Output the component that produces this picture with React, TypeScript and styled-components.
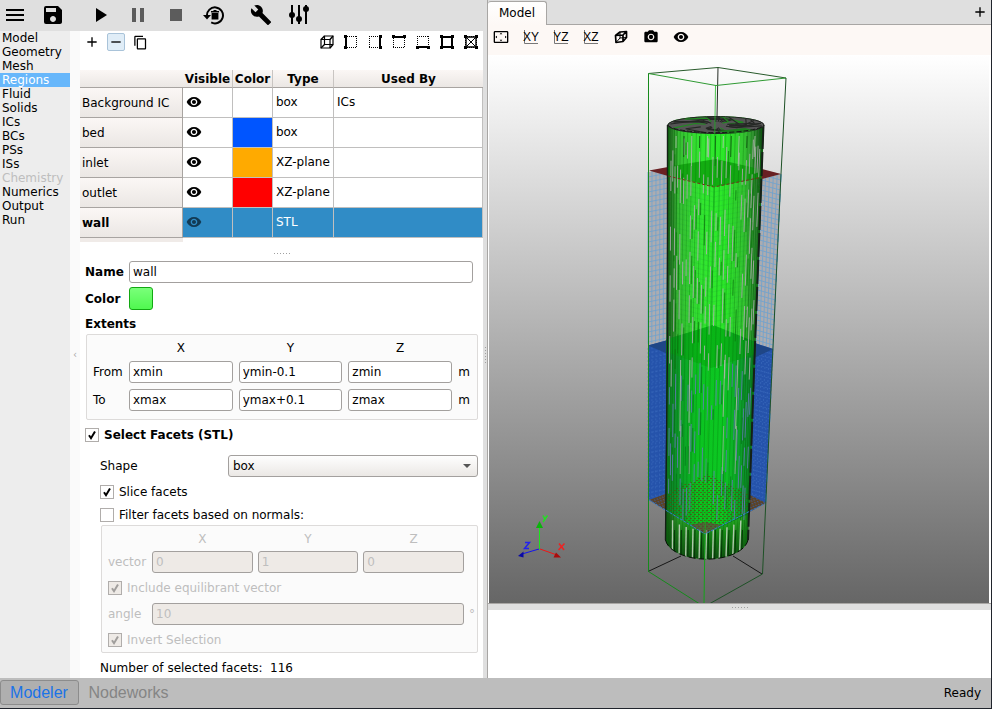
import React from "react";
import styled, { createGlobalStyle, css } from "styled-components";
import {
  MdAdd,
  MdBuild,
  MdContentCopy,
  MdMenu,
  MdPause,
  MdPhotoCamera,
  MdPlayArrow,
  MdRemove,
  MdSave,
  MdSettingsOverscan,
  MdStop,
  MdVisibility,
} from "react-icons/md";

const GlobalStyle = createGlobalStyle`
  * { box-sizing: border-box; }
  body { margin: 0; background: #fff; }
  body, button, input, select, table {
    font-family: "DejaVu Sans", Verdana, sans-serif;
    font-size: 12px;
    line-height: 14px;
    color: #000;
  }
`;

const Window = styled.div`
  display: flex;
  flex-direction: column;
  min-height: 100vh;
  border-right: 1px solid #20242c;
  border-bottom: 1px solid #20242c;
`;

const Main = styled.main`
  flex: 1;
  display: grid;
  grid-template-columns: minmax(0, 487fr) minmax(0, 504fr);
`;

const LeftSide = styled.div`
  display: flex;
  flex-direction: column;
`;

const MainToolbar = styled.header`
  display: flex;
  align-items: center;
  height: 31px;
  padding: 0 0 2px 3px;
  background: #dfdfdf;
`;

const ToolButton = styled.button<{ $size?: number; $after?: number; $muted?: boolean; $active?: boolean }>`
  display: flex;
  align-items: center;
  justify-content: center;
  flex: none;
  width: ${(p) => p.$size ?? 24}px;
  height: ${(p) => p.$size ?? 24}px;
  margin-right: ${(p) => p.$after ?? 0}px;
  padding: 0;
  border: 0;
  background: none;
  color: ${(p) => (p.$muted ? "#5c5c5c" : "#000")};
  ${(p) =>
    p.$active &&
    css`
      border: 1px solid #a9c3d9;
      border-radius: 2px;
      background: #e0edf7;
    `}
`;

const Workspace = styled.div`
  flex: 1;
  display: flex;
`;

const Nav = styled.nav`
  flex: none;
  display: flex;
  flex-direction: column;
  width: 70px;
  background: #ededed;
`;

const NavLink = styled.a<{ $state?: "active" | "disabled" }>`
  padding-left: 2px;
  line-height: 14px;
  text-decoration: none;
  color: ${(p) => (p.$state === "active" ? "#fff" : p.$state === "disabled" ? "#bebebe" : "#000")};
  background: ${(p) => (p.$state === "active" ? "#67b7fb" : "transparent")};
`;

const CollapseBar = styled.button`
  flex: none;
  width: 10px;
  padding: 0;
  border: 0;
  background: #fafafa;
  color: #aaa;
  font-size: 10px;
`;

const Panel = styled.section`
  flex: 1;
  min-width: 0;
  background: #fff;
`;

const Splitter = styled.div`
  flex: none;
  display: flex;
  align-items: center;
  justify-content: center;
  width: 4px;
  background: #dfdfdf;
`;

const SplitterRow = styled.div<{ $filled?: boolean }>`
  display: flex;
  align-items: center;
  justify-content: center;
  height: ${(p) => (p.$filled ? 7 : 19)}px;
  padding-top: ${(p) => (p.$filled ? 0 : 4)}px;
  background: ${(p) => (p.$filled ? "#dfdfdf" : "none")};
  border-top: ${(p) => (p.$filled ? "1px solid #a8a6a4" : "0")};
`;

const Grip = styled.span<{ $vertical?: boolean }>`
  width: ${(p) => (p.$vertical ? 1 : 16)}px;
  height: ${(p) => (p.$vertical ? 16 : 1)}px;
  background: repeating-linear-gradient(
    ${(p) => (p.$vertical ? "180deg" : "90deg")},
    #a0a0a0 0 1px,
    transparent 1px 3px
  );
`;

const RegionToolbar = styled.div`
  display: flex;
  align-items: center;
  height: 23px;
  margin-bottom: 16px;
  padding-bottom: 1px;
`;

const Spacer = styled.span`
  flex: 1;
`;

const RegionTable = styled.table`
  width: 100%;
  table-layout: fixed;
  border-collapse: separate;
  border-spacing: 0;
  text-align: left;
`;

const Col = styled.col<{ $width?: number }>`
  width: ${(p) => (p.$width ? `${p.$width}px` : "auto")};
`;

const HeadCell = styled.th<{ $line?: boolean }>`
  height: 18px;
  padding: 0;
  text-align: center;
  white-space: nowrap;
  background: linear-gradient(#fbf7f5, #ebe7e4);
  border-bottom: 1px solid #a8a4a1;
  border-right: ${(p) => (p.$line ? "1px solid #c9c5c2" : "0")};
`;

const RowHead = styled.th<{ $bold?: boolean }>`
  height: 30px;
  padding: 0 2px;
  font-weight: ${(p) => (p.$bold ? "bold" : "normal")};
  white-space: nowrap;
  background: linear-gradient(#fbf7f5, #ebe7e4);
  border-right: 1px solid #a8a4a1;
  border-bottom: 1px solid #a8a4a1;
`;

const Cell = styled.td<{ $fill?: string; $selected?: boolean }>`
  height: 30px;
  padding: 0 3px 2px;
  color: ${(p) => (p.$selected ? "#fff" : "#000")};
  background: ${(p) => (p.$selected ? "#308cc6" : p.$fill ?? "#fff")};
  border-right: 1px solid #c0bfbe;
  border-bottom: 1px solid #c0bfbe;
  svg {
    display: block;
    color: ${(p) => (p.$selected ? "#123a54" : "#000")};
  }
`;

const HeaderTail = styled.div`
  width: 103px;
  height: 4px;
  background: #f0ebe8;
`;

const Form = styled.form`
  display: flex;
  flex-direction: column;
  padding: 0 5px 0 5px;
`;

const Field = styled.div<{ $label: number; $gap?: number; $inset?: number }>`
  display: grid;
  grid-template-columns: ${(p) => p.$label}px minmax(0, 1fr);
  align-items: center;
  margin-bottom: ${(p) => p.$gap ?? 0}px;
  padding-right: ${(p) => p.$inset ?? 0}px;
`;

const Label = styled.label<{ $bold?: boolean; $muted?: boolean }>`
  font-weight: ${(p) => (p.$bold ? "bold" : "normal")};
  color: ${(p) => (p.$muted ? "#bebebe" : "#000")};
`;

const TextInput = styled.input`
  width: 100%;
  min-width: 0;
  height: 22px;
  padding: 0 3px;
  border: 1px solid #a3a09e;
  border-radius: 3px;
  background: #fff;
  &:disabled {
    background: #eeeae6;
    color: #bebebe;
  }
`;

const ColorButton = styled.button`
  width: 24px;
  height: 23px;
  border: 1px solid #12a812;
  border-radius: 3px;
  background: linear-gradient(#7aff7a, #50f850);
`;

const SectionTitle = styled.h2`
  margin: 0 0 3px;
  font-size: 12px;
  line-height: 14px;
`;

const ExtentsBox = styled.div`
  display: grid;
  grid-template-columns: 30px repeat(3, minmax(0, 1fr)) 12px;
  column-gap: 6px;
  row-gap: 6px;
  align-items: center;
  height: 86px;
  margin: 0 0 8px 1px;
  padding: 6px 7px 8px 6px;
  border: 1px solid #dddbda;
  border-radius: 2px;
  background: #fbfbfb;
`;

const NormalsBox = styled.fieldset`
  display: flex;
  flex-direction: column;
  margin: 3px 0 8px 1px;
  padding: 6px;
  border: 1px solid #dddbda;
  border-radius: 2px;
  background: #fbfbfb;
  min-width: 0;
  height: 128px;
`;

const VectorGrid = styled.div`
  display: grid;
  grid-template-columns: 39px repeat(3, minmax(0, 1fr)) 1px;
  column-gap: 5px;
  row-gap: 5px;
  align-items: center;
  margin-bottom: 8px;
  padding-right: 1px;
`;

const AngleRow = styled.div`
  display: grid;
  grid-template-columns: 39px minmax(0, 1fr) 6px;
  column-gap: 5px;
  align-items: center;
  margin: 8px 0;
  margin-right: -4px;
`;

const AxisName = styled.span<{ $muted?: boolean }>`
  text-align: center;
  color: ${(p) => (p.$muted ? "#bebebe" : "#000")};
`;

const Unit = styled.span<{ $muted?: boolean }>`
  text-align: right;
  color: ${(p) => (p.$muted ? "#bebebe" : "#000")};
`;

const Options = styled.div`
  padding-left: 15px;
`;

const CheckRow = styled.div<{ $gap?: number }>`
  display: flex;
  align-items: center;
  gap: 5px;
  height: 14px;
  margin-bottom: ${(p) => p.$gap ?? 0}px;
`;

const Check = styled.input.attrs({ type: "checkbox" })`
  appearance: none;
  flex: none;
  width: 14px;
  height: 14px;
  margin: 0;
  border: 1px solid #b0adab;
  background-color: #fff;
  background-position: center;
  background-repeat: no-repeat;
  &:checked {
    background-image: url("data:image/svg+xml,%3Csvg xmlns='http://www.w3.org/2000/svg' width='12' height='12'%3E%3Cpath d='M3 6.2L5 9.2L9 2.6' fill='none' stroke='black' stroke-width='2'/%3E%3C/svg%3E");
  }
  &:disabled {
    background-color: #eeeae6;
  }
  &:disabled:checked {
    background-image: url("data:image/svg+xml,%3Csvg xmlns='http://www.w3.org/2000/svg' width='12' height='12'%3E%3Cpath d='M3 6.2L5 9.2L9 2.6' fill='none' stroke='%23a09e9c' stroke-width='2'/%3E%3C/svg%3E");
  }
`;

const Select = styled.select`
  appearance: none;
  width: 100%;
  height: 22px;
  padding: 0 4px;
  border: 1px solid #a3a09e;
  border-radius: 3px;
  background:
    url("data:image/svg+xml,%3Csvg xmlns='http://www.w3.org/2000/svg' width='8' height='4'%3E%3Cpath d='M0 0H8L4 4Z' fill='%23555'/%3E%3C/svg%3E") right 6px center no-repeat,
    linear-gradient(#fefefe, #ebe8e5);
`;

const RightSide = styled.div`
  display: flex;
  flex-direction: column;
  border-left: 1px solid #a8a6a4;
  background: #fff;
`;

const TabBar = styled.div`
  display: flex;
  height: 25px;
  padding-top: 1px;
  background: linear-gradient(#dfdfdf 24px, #a8a6a4 24px);
`;

const Tab = styled.button`
  width: 59px;
  padding: 0 0 2px;
  border: 1px solid #a8a6a4;
  border-width: 1px 1px 0 0;
  border-radius: 3px 3px 0 0;
  background: linear-gradient(#fff, #fdf8f5);
`;

const ViewToolbar = styled.div`
  display: flex;
  align-items: center;
  gap: 6px;
  height: 30px;
  padding: 0 1px 6px;
  background: #fdf8f5;
`;

const Viewport = styled.div`
  flex: 1;
  display: flex;
  min-height: 0;
  margin: 0 2px 0 1px;
  background: linear-gradient(#fff, #666);
  svg {
    flex: 1;
    width: 100%;
    height: auto;
  }
`;

const Console = styled.div`
  height: 68px;
  background: #fff;
`;

const StatusBar = styled.footer`
  display: flex;
  align-items: center;
  height: 30px;
  padding: 0 10px 1px 0;
  background: #bdbdbd;
`;

const ModeButton = styled.button<{ $active?: boolean }>`
  height: 25px;
  width: ${(p) => (p.$active ? 79 : 100)}px;
  padding: 0 1px 0 0;
  border: 1px solid ${(p) => (p.$active ? "#8c8c8c" : "transparent")};
  border-radius: 3px;
  background: ${(p) => (p.$active ? "#afafaf" : "none")};
  color: ${(p) => (p.$active ? "#1a73e8" : "#858585")};
  font-family: "Liberation Sans", Arial, sans-serif;
  font-size: 16px;
  line-height: 20px;
`;

/* ---------- icons ---------- */

const ResetIcon = () => (
  <svg width="22" height="20" viewBox="0 0 22 20">
    <path d="M4 11A8 8 0 1 1 8.2 17.4" fill="none" stroke="#000" strokeWidth="2" />
    <path d="M0 10H8L4 14.5Z" fill="#000" />
    <path d="M8 6H16V7.5H8ZM10.5 5H13.5V6H10.5ZM8.6 8H15.4V14.5H8.6Z" fill="#000" />
  </svg>
);

const SlidersIcon = () => (
  <svg width="20" height="19" viewBox="0 0 20 19" stroke="#000" strokeWidth="2">
    <path d="M3 0V19M10 0V19M17 0V19" />
    <circle cx="3" cy="10" r="2" fill="#000" />
    <circle cx="10" cy="14" r="2" fill="#000" />
    <circle cx="17" cy="4" r="2" fill="#000" />
  </svg>
);

const CubeIcon = () => (
  <svg width="14" height="14" viewBox="0 0 14 14" fill="none" stroke="#000">
    <path d="M1 4.5H10V13H1ZM4.5 1H13V9.5H4.5Z" strokeWidth="1.2" />
    <path d="M1 4.5L4.5 1M10 4.5L13 1M10 13L13 9.5M1 13L4.5 9.5" strokeWidth="1.4" />
  </svg>
);

type Side = "left" | "right" | "top" | "bottom" | "all" | "cross";

const sidePaths: Record<Side, string> = {
  left: "M2 0V14",
  right: "M12 0V14",
  top: "M0 2H14",
  bottom: "M0 12H14",
  all: "M2 2H12V12H2Z",
  cross: "M2 2H12V12H2Z",
};

const sideCorners: Record<Side, number[][]> = {
  left: [[0, 0], [0, 11]],
  right: [[11, 0], [11, 11]],
  top: [[0, 0], [11, 0]],
  bottom: [[0, 11], [11, 11]],
  all: [[0, 0], [11, 0], [0, 11], [11, 11]],
  cross: [[0, 0], [11, 0], [0, 11], [11, 11]],
};

const SideIcon = ({ side }: { side: Side }) => (
  <svg width="14" height="14" viewBox="0 0 14 14" fill="none" stroke="#000">
    <path
      d="M1 1.5H13M1 12.5H13M1.5 1V13M12.5 1V13"
      strokeDasharray="1 1"
      shapeRendering="crispEdges"
    />
    <path d={sidePaths[side]} strokeWidth={side === "cross" ? 1.4 : 2} />
    {side === "cross" && <path d="M2 2L12 12M12 2L2 12" strokeWidth="1" />}
    {sideCorners[side].map(([x, y]) => (
      <rect key={`${x}-${y}`} x={x} y={y} width="3" height="3" fill="#000" stroke="none" />
    ))}
  </svg>
);

const PlaneText = styled.text`
  font-family: "Liberation Sans Narrow", "Liberation Sans", sans-serif;
  font-size: 12px;
  fill: #000;
`;

const PlaneIcon = ({ name }: { name: string }) => (
  <svg width="18" height="16" viewBox="0 0 18 16">
    <path d="M2.5 1V14.5H16" fill="none" stroke="#777" />
    <PlaneText x="9" y="12" textAnchor="middle">{name}</PlaneText>
  </svg>
);

const PerspectiveIcon = () => (
  <svg width="14" height="14" viewBox="0 0 14 14" fill="none" stroke="#000" strokeLinejoin="round">
    <path d="M1.5 5.5L9 5V11.5L2 12.5ZM1.5 5.5L6 2L12.5 1.5L9 5M12.5 1.5V7.5L9 11.5" strokeWidth="1.7" />
    <path d="M6 2V8L2 12.5M6 8L12.5 7.5" />
  </svg>
);

/* ---------- 3D scene ---------- */

function makeRandom(seed: number) {
  let s = seed;
  return () => {
    s = (s * 1103515245 + 12345) % 2147483648;
    return s / 2147483648;
  };
}

const lerp = (a: number, b: number, t: number) => a + (b - a) * t;

/** x position on the cylinder surface for u in -1..1 at height y. */
const surfaceX = (u: number, y: number) => {
  const t = (y - 125) / 415;
  return lerp(716, 706.5, t) + u * lerp(48, 41, t);
};

interface Streak {
  d: string;
  color: string;
  width: number;
  opacity: number;
}

function buildStreaks(): Streak[] {
  const random = makeRandom(77);
  const streaks: Streak[] = [];
  const add = (u: number, y1: number, y2: number, color: string, opacity: number, width = 1) =>
    streaks.push({
      d: `M${surfaceX(u, y1).toFixed(1)} ${y1.toFixed(1)}L${surfaceX(u, y2).toFixed(1)} ${y2.toFixed(1)}`,
      color,
      width,
      opacity,
    });

  const facets = 30;
  for (let i = 0; i <= facets; i++) {
    const u = Math.sin(lerp(-Math.PI / 2, Math.PI / 2, i / facets));
    const edge = Math.sqrt(1 - u * u);
    add(u, 125 + 8 * edge, 540 + 20 * edge, "#086a0b", Math.abs(u) > 0.8 ? 0.6 : 0.3);
  }
  for (let c = 0; c < 26; c++) {
    const u = Math.sin(lerp(-1.2, 1.2, c / 25));
    let y = 138 + random() * 40;
    while (y < 505) {
      const length = 14 + random() * 22;
      const light = y > 362 ? "#6678bd" : "#b9adb9";
      if (random() > 0.22) add(u, y, Math.min(y + length, 520), light, 0.8);
      if (random() > 0.6) add(u + 0.04, y + 4, Math.min(y + length, 520), y > 362 ? "#06741b" : "#0b700c", 0.7);
      y += length + 8 + random() * 34;
    }
  }
  for (const u of [-0.68, -0.47, 0.32, 0.62]) {
    add(u, 360, 404 + Math.abs(u) * 40, "#b7b7b0", 0.85);
    add(u + 0.02, 426, 474, "#a9a7a9", 0.7);
  }
  for (let i = 0; i < 11; i++) {
    const u = -0.83 + i * 0.165;
    const edge = Math.sqrt(1 - u * u);
    const end = 540 + 20 * edge;
    add(u, 136, 136 + 12 + (i % 3) * 9, i % 2 ? "#0b4a0c" : "#b8c4b4", 0.8);
    add(u, 508 + 22 * edge, end, "#b9ceb4", 0.95, 1.4);
    add(u + 0.05, 530, end, "#032905", 0.8);
  }
  return streaks;
}

function buildTopFacets(): string[] {
  const random = makeRandom(19);
  return Array.from({ length: 26 }, () => {
    const a = random() * Math.PI * 2;
    const r = 0.4 + random() * 0.5;
    const b = a + 0.3 + random() * 0.8;
    const p = (t: number, k: number) => `${(716 + Math.cos(t) * 46 * k).toFixed(1)} ${(125 + Math.sin(t) * 8 * k).toFixed(1)}`;
    return `M${p(a, 1)}L${p(b, r)}L${p(b, r * 0.5)}`;
  });
}

/** Line mesh over a wall whose two vertical edges run from top to bottom. */
function wallMesh(top: number[], bottom: number[], rise: number, columns: number, step: number) {
  const [xl, xr, yt] = top;
  const [bl, br, yb] = bottom;
  let d = "";
  for (let c = 0; c <= columns; c++) {
    const t = c / columns;
    d += `M${lerp(xl, xr, t).toFixed(1)} ${(yt + rise * t).toFixed(1)}L${lerp(bl, br, t).toFixed(1)} ${(yb + rise * t).toFixed(1)}`;
  }
  for (let y = yt + step; y < yb; y += step) {
    const t = (y - yt) / (yb - yt);
    d += `M${lerp(xl, bl, t).toFixed(1)} ${y.toFixed(1)}L${lerp(xr, br, t).toFixed(1)} ${(y + rise).toFixed(1)}`;
  }
  return d;
}

const streaks = buildStreaks();
const topFacets = buildTopFacets();
const leftMesh = wallMesh([648, 668, 172], [648, 667, 344], -4, 5, 5);
const rightMesh = wallMesh([762, 781, 170], [756, 773, 344], 5, 5, 5);
const leftBedMesh = wallMesh([648, 668, 348], [648, 667, 500], -4, 5, 5);
const rightBedMesh = wallMesh([755, 773, 344], [749, 766, 496], 5, 5, 5);
const frontMesh = wallMesh([668, 714, 176], [667, 711, 350], 11, 11, 5);
const frontMeshRight = wallMesh([714, 762, 187], [711, 756, 361], -9, 11, 5);

const cylinderPath = "M667.5 125A48 9 0 0 1 764 125L748 540A41.5 21.5 0 0 1 665.5 540Z";

const Scene = () => (
  <svg viewBox="489 55 500 548" preserveAspectRatio="xMidYMid meet" role="img" aria-label="Model view" fill="none">
    <defs>
      <linearGradient id="body">
        <stop offset="0" stopColor="#1c4d1c" />
        <stop offset="0.06" stopColor="#2f7a2c" />
        <stop offset="0.13" stopColor="#37bd33" />
        <stop offset="0.35" stopColor="#33e630" />
        <stop offset="0.6" stopColor="#2be828" />
        <stop offset="0.8" stopColor="#35c431" />
        <stop offset="0.92" stopColor="#2f7f30" />
        <stop offset="1" stopColor="#0d2f10" />
      </linearGradient>
      <linearGradient id="bed">
        <stop offset="0" stopColor="#10363a" />
        <stop offset="0.14" stopColor="#0e7c2e" />
        <stop offset="0.4" stopColor="#0bc321" />
        <stop offset="0.6" stopColor="#0cc822" />
        <stop offset="0.86" stopColor="#0c7a33" />
        <stop offset="1" stopColor="#12324a" />
      </linearGradient>
      <linearGradient id="shade" x1="0" y1="0" x2="0" y2="1">
        <stop offset="0" stopColor="#0a540b" stopOpacity="0" />
        <stop offset="0.5" stopColor="#0a480b" stopOpacity="0.6" />
        <stop offset="1" stopColor="#0a360b" stopOpacity="0.95" />
      </linearGradient>
      <pattern id="dots" width="4" height="4" patternUnits="userSpaceOnUse">
        <path d="M0 .5H2M2 2.5H4" stroke="#5b4a10" />
      </pattern>
      <pattern id="gauze" width="4" height="4" patternUnits="userSpaceOnUse" patternTransform="rotate(25)">
        <rect width="4" height="4" fill="#5c4224" />
        <path d="M0 .5H1.5M2 2.5H3.5" stroke="#3a5c98" />
      </pattern>
      <clipPath id="cylinderClip"><path d={cylinderPath} /></clipPath>
      <clipPath id="topClip"><ellipse cx="716" cy="125" rx="48" ry="9" /></clipPath>
    </defs>

    <path d="M648 571.5L681 556M762 574L733 556" stroke="#171717" />
    <path d="M718 67.5L717 117" stroke="#252c25" />

    <path d="M648 172L668 168V344L648 348ZM762 170L781 174L773 349L756 344Z" fill="#acacb0" />
    <path d={leftMesh + rightMesh} stroke="#6da2cf" strokeWidth="0.8" />
    <path d="M648 345.5L668 340V496L648 500ZM755 343L773 349L766 503L749 496Z" fill="#2553ab" />
    <path d={leftBedMesh + rightBedMesh} stroke="#4372c2" strokeWidth="0.5" strokeDasharray="2 2" />
    <path d="M648 345.5L668 340V354ZM773 349L754 343V358Z" fill="#1f4686" />
    <path d="M649 170.5L668 167V176ZM781 174L762 169V179Z" fill="#692023" />
    <path d="M649 500L668 493V512ZM766 503L748 494V513Z" fill="url(#gauze)" />

    <path d={cylinderPath} fill="url(#body)" />
    <g clipPath="url(#cylinderClip)">
      <path d="M648 170L716 159L781 174L714 187Z" fill="#0a9a08" fillOpacity="0.75" />
      <path d={frontMesh + frontMeshRight} stroke="#239742" strokeWidth="0.5" opacity="0.3" />
      <path d="M648 345L713 325L773 349V503L705 534L648 500Z" fill="url(#bed)" />
      <path d="M648 345L713 325L773 349L711 368Z" fill="#05a40b" fillOpacity="0.5" />
      <path d="M649 500L708 474L766 503L705 534Z" fill="url(#dots)" opacity="0.7" />
      <path d="M648 500L705 534L766 503V565H648Z" fill="url(#shade)" />
      {streaks.map((s, i) => (
        <path key={i} d={s.d} stroke={s.color} strokeWidth={s.width} opacity={s.opacity} />
      ))}
      <path d="M668 176L714 187L763 177" stroke="#73331d" strokeDasharray="3 2" />
      <path d="M690 525L705 534L722 525L705 522Z" fill="#722f42" opacity="0.6" />
    </g>
    <path d="M667.5 125V345L665.5 540" stroke="#152017" strokeWidth="1.4" />
    <path d="M763.5 125L755 345L748 540" stroke="#152017" strokeWidth="2" strokeDasharray="24 3" />
    <path d="M665.5 540A41.5 21.5 0 0 0 748 540" stroke="#081008" strokeDasharray="7 3" />

    <ellipse cx="716" cy="125" rx="48" ry="8.5" fill="#555" stroke="#222" />
    <g clipPath="url(#topClip)">
      {topFacets.map((d, i) => (
        <path key={d} d={d} stroke={i % 6 === 0 ? "#208a20" : "#252825"} strokeWidth="1.1" />
      ))}
      <path d="M717 131L745 128L756 131L730 134Z" fill="#1c7d1d" />
    </g>
    <path d="M667.5 125A48.5 8.5 0 0 0 764 125" stroke="#151a15" strokeDasharray="5 2" />

    <path d="M649 500L705 534L766 503" stroke="#347bd0" strokeDasharray="3 1" />
    <path d="M648.5 170V500" stroke="#405a69" strokeDasharray="9 4" />
    <path d="M781 174L773 349L766 503" stroke="#4895de" strokeDasharray="8 12" />

    <path d="M648.5 73.5L718 67.5L786 78" stroke="#285a2b" />
    <path d="M648.5 73.5L716 85.5L786 78" stroke="#2f9a33" />
    <path d="M648.5 73.5V571.5L699 603.5" stroke="#168a1c" />
    <path d="M786 78L781 174L762.5 574L710 603.5" stroke="#1e5126" />
    <path d="M715.5 85.5L714 187L705 534" stroke="#14b61a" opacity="0.75" />
    <path d="M705 534L704 603.5" stroke="#15a31a" />

    <path d="M539.5 549V525" stroke="#1be51b" />
    <path d="M539.5 521L543 528H536Z" fill="#0ab30a" />
    <path d="M540 549L557 555" stroke="#f21414" />
    <path d="M561 557.5L556 552.5L553.5 557.5Z" fill="#a90b0b" />
    <path d="M539 549L522 554" stroke="#1414ee" />
    <path d="M518 556L523.5 551.5V557.5Z" fill="#0909a5" />
    <path d="M543 515.5L545 519L547.5 515.5M545 519L543 522" stroke="#22e022" strokeWidth="1.5" />
    <path d="M559 543.5L564 550M564.5 543.5L558.5 550" stroke="#ed2222" strokeWidth="1.5" />
    <path d="M525 542.5H529.5L524.5 548.5H529" stroke="#2222ed" strokeWidth="1.5" />
  </svg>
);

/* ---------- data ---------- */

const navItems: { name: string; state?: "active" | "disabled" }[] = [
  { name: "Model" },
  { name: "Geometry" },
  { name: "Mesh" },
  { name: "Regions", state: "active" },
  { name: "Fluid" },
  { name: "Solids" },
  { name: "ICs" },
  { name: "BCs" },
  { name: "PSs" },
  { name: "ISs" },
  { name: "Chemistry", state: "disabled" },
  { name: "Numerics" },
  { name: "Output" },
  { name: "Run" },
];

const regions: { name: string; color?: string; type: string; usedBy?: string; selected?: boolean }[] = [
  { name: "Background IC", type: "box", usedBy: "ICs" },
  { name: "bed", color: "#0055ff", type: "box" },
  { name: "inlet", color: "#ffaa00", type: "XZ-plane" },
  { name: "outlet", color: "#ff0000", type: "XZ-plane" },
  { name: "wall", type: "STL", selected: true },
];

const sides: Side[] = ["left", "right", "top", "bottom", "all", "cross"];

const extents = [
  { label: "From", values: ["xmin", "ymin-0.1", "zmin"] },
  { label: "To", values: ["xmax", "ymax+0.1", "zmax"] },
];

const axes = ["X", "Y", "Z"];

export default function App() {
  return (
    <Window>
      <GlobalStyle />
      <Main>
        <LeftSide>
          <MainToolbar>
            <ToolButton aria-label="Menu" $after={14}><MdMenu size={24} /></ToolButton>
            <ToolButton aria-label="Save" $after={23}><MdSave size={24} /></ToolButton>
            <ToolButton aria-label="Run" $after={14}><MdPlayArrow size={24} /></ToolButton>
            <ToolButton aria-label="Pause" $muted $after={14}><MdPause size={24} /></ToolButton>
            <ToolButton aria-label="Stop" $muted $after={14}><MdStop size={24} /></ToolButton>
            <ToolButton aria-label="Reset" $after={23}><ResetIcon /></ToolButton>
            <ToolButton aria-label="Build" $after={14}><MdBuild size={22} /></ToolButton>
            <ToolButton aria-label="Settings"><SlidersIcon /></ToolButton>
          </MainToolbar>
          <Workspace>
            <Nav>
              {navItems.map((item) => (
                <NavLink key={item.name} href={`#${item.name}`} $state={item.state}>{item.name}</NavLink>
              ))}
            </Nav>
            <CollapseBar aria-label="Collapse navigation">‹</CollapseBar>
            <Panel>
              <RegionToolbar>
                <ToolButton aria-label="Add region" $after={3}><MdAdd size={16} /></ToolButton>
                <ToolButton aria-label="Remove region" $size={18} $after={3} $active><MdRemove size={16} /></ToolButton>
                <ToolButton aria-label="Copy region"><MdContentCopy size={15} /></ToolButton>
                <Spacer />
                <ToolButton aria-label="All faces"><CubeIcon /></ToolButton>
                {sides.map((side) => (
                  <ToolButton key={side} aria-label={`Region ${side}`}><SideIcon side={side} /></ToolButton>
                ))}
              </RegionToolbar>
              <RegionTable>
                <colgroup>
                  <Col $width={103} />
                  <Col $width={50} />
                  <Col $width={40} />
                  <Col $width={61} />
                  <Col />
                </colgroup>
                <thead>
                  <tr>
                    <HeadCell aria-label="Region" />
                    <HeadCell $line>Visible</HeadCell>
                    <HeadCell $line>Color</HeadCell>
                    <HeadCell $line>Type</HeadCell>
                    <HeadCell>Used By</HeadCell>
                  </tr>
                </thead>
                <tbody>
                  {regions.map((r) => (
                    <tr key={r.name}>
                      <RowHead scope="row" $bold={r.selected}>{r.name}</RowHead>
                      <Cell $selected={r.selected}><MdVisibility size={16} /></Cell>
                      <Cell $selected={r.selected} $fill={r.color} />
                      <Cell $selected={r.selected}>{r.type}</Cell>
                      <Cell $selected={r.selected}>{r.usedBy}</Cell>
                    </tr>
                  ))}
                </tbody>
              </RegionTable>
              <HeaderTail />
              <SplitterRow><Grip /></SplitterRow>
              <Form>
                <Field $label={44} $gap={4} $inset={5}>
                  <Label htmlFor="name" $bold>Name</Label>
                  <TextInput id="name" defaultValue="wall" />
                </Field>
                <Field $label={44} $gap={7}>
                  <Label htmlFor="color" $bold>Color</Label>
                  <ColorButton id="color" type="button" aria-label="Region color" />
                </Field>
                <SectionTitle>Extents</SectionTitle>
                <ExtentsBox>
                  <span />
                  {axes.map((a) => <AxisName key={a}>{a}</AxisName>)}
                  <span />
                  {extents.map((row) => (
                    <React.Fragment key={row.label}>
                      <Label htmlFor={`${row.label}-0`}>{row.label}</Label>
                      {row.values.map((v, i) => (
                        <TextInput key={v} id={`${row.label}-${i}`} aria-label={`${row.label} ${axes[i]}`} defaultValue={v} />
                      ))}
                      <Unit>m</Unit>
                    </React.Fragment>
                  ))}
                </ExtentsBox>
                <CheckRow $gap={13}>
                  <Check id="facets" defaultChecked />
                  <Label htmlFor="facets" $bold>Select Facets (STL)</Label>
                </CheckRow>
                <Options>
                  <Field $label={128} $gap={8}>
                    <Label htmlFor="shape">Shape</Label>
                    <Select id="shape" defaultValue="box"><option>box</option></Select>
                  </Field>
                  <CheckRow $gap={9}>
                    <Check id="slice" defaultChecked />
                    <Label htmlFor="slice">Slice facets</Label>
                  </CheckRow>
                  <CheckRow>
                    <Check id="filter" />
                    <Label htmlFor="filter">Filter facets based on normals:</Label>
                  </CheckRow>
                  <NormalsBox disabled>
                    <VectorGrid>
                      <span />
                      {axes.map((a) => <AxisName key={a} $muted>{a}</AxisName>)}
                      <span />
                      <Label htmlFor="vector-0" $muted>vector</Label>
                      {["0", "1", "0"].map((v, i) => (
                        <TextInput key={i} id={`vector-${i}`} aria-label={`vector ${axes[i]}`} defaultValue={v} />
                      ))}
                    </VectorGrid>
                    <CheckRow>
                      <Check id="equilibrant" defaultChecked />
                      <Label htmlFor="equilibrant" $muted>Include equilibrant vector</Label>
                    </CheckRow>
                    <AngleRow>
                      <Label htmlFor="angle" $muted>angle</Label>
                      <TextInput id="angle" defaultValue="10" />
                      <Unit $muted>°</Unit>
                    </AngleRow>
                    <CheckRow>
                      <Check id="invert" defaultChecked />
                      <Label htmlFor="invert" $muted>Invert Selection</Label>
                    </CheckRow>
                  </NormalsBox>
                  <div>Number of selected facets:&nbsp; 116</div>
                </Options>
              </Form>
            </Panel>
            <Splitter><Grip $vertical /></Splitter>
          </Workspace>
        </LeftSide>
        <RightSide>
          <TabBar role="tablist">
            <Tab role="tab" aria-selected="true">Model</Tab>
            <Spacer />
            <ToolButton aria-label="Add view" $size={22}><MdAdd size={16} /></ToolButton>
          </TabBar>
          <ViewToolbar>
            <ToolButton aria-label="Fit view"><MdSettingsOverscan size={16} /></ToolButton>
            {["XY", "YZ", "XZ"].map((p) => (
              <ToolButton key={p} aria-label={`${p} view`}><PlaneIcon name={p} /></ToolButton>
            ))}
            <ToolButton aria-label="Perspective"><PerspectiveIcon /></ToolButton>
            <ToolButton aria-label="Screenshot"><MdPhotoCamera size={16} /></ToolButton>
            <ToolButton aria-label="Visibility"><MdVisibility size={16} /></ToolButton>
          </ViewToolbar>
          <Viewport><Scene /></Viewport>
          <SplitterRow $filled><Grip /></SplitterRow>
          <Console />
        </RightSide>
      </Main>
      <StatusBar>
        <ModeButton $active>Modeler</ModeButton>
        <ModeButton>Nodeworks</ModeButton>
        <Spacer />
        <span>Ready</span>
      </StatusBar>
    </Window>
  );
}
